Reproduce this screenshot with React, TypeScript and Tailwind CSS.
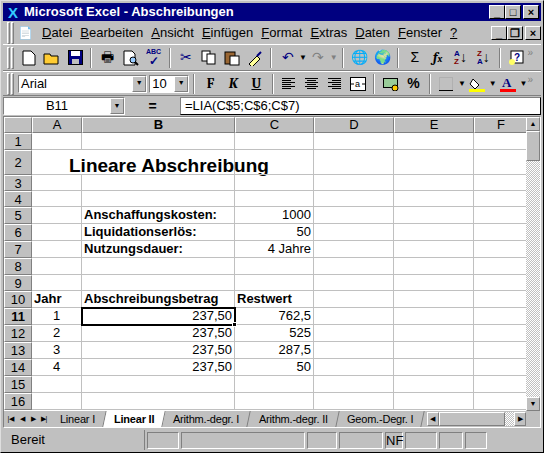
import React from 'react';

const ui = { fontFamily: '"Liberation Sans", Arial, sans-serif' };

const Raised = ({ className = '', children }: { className?: string; children?: React.ReactNode }) => (
  <div className={`border border-t-white border-l-white border-r-[#808080] border-b-[#808080] bg-[#c0c0c0] ${className}`}>{children}</div>
);

const Grip = () => (
  <div className="flex gap-[1px] h-[22px] mx-1">
    <div className="w-[3px] border border-t-white border-l-white border-r-[#808080] border-b-[#808080]" />
    <div className="w-[3px] border border-t-white border-l-white border-r-[#808080] border-b-[#808080]" />
  </div>
);

const Sep = () => <div className="w-[2px] h-[20px] mx-1 border-l border-l-[#808080] border-r border-r-white" />;

const Btn = ({ children }: { children: React.ReactNode }) => (
  <div className="w-[23px] h-[22px] flex items-center justify-center">{children}</div>
);

const Caption = ({ glyph }: { glyph: string }) => (
  <Raised className="w-[16px] h-[14px] flex items-center justify-center text-[11px] font-bold leading-none text-black border-b-black border-r-black">{glyph}</Raised>
);

const cols = ['A', 'B', 'C', 'D', 'E', 'F'];
type Cell = { t?: string; cls?: string };
const rows: { n: number; h: string; cells: Cell[] }[] = [
  { n: 1, h: 'h-[17px]', cells: [] },
  { n: 2, h: 'h-[25px]', cells: [{ t: 'Lineare Abschreibung', cls: 'col-span-2 text-[19px] font-bold pl-[37px] whitespace-nowrap' }] },
  { n: 3, h: 'h-[16px]', cells: [] },
  { n: 4, h: 'h-[16px]', cells: [] },
  { n: 5, h: 'h-[17px]', cells: [{}, { t: 'Anschaffungskosten:', cls: 'font-bold' }, { t: '1000', cls: 'text-right' }] },
  { n: 6, h: 'h-[17px]', cells: [{}, { t: 'Liquidationserlös:', cls: 'font-bold' }, { t: '50', cls: 'text-right' }] },
  { n: 7, h: 'h-[17px]', cells: [{}, { t: 'Nutzungsdauer:', cls: 'font-bold' }, { t: '4 Jahre', cls: 'text-right' }] },
  { n: 8, h: 'h-[17px]', cells: [] },
  { n: 9, h: 'h-[16px]', cells: [] },
  { n: 10, h: 'h-[17px]', cells: [{ t: 'Jahr', cls: 'font-bold' }, { t: 'Abschreibungsbetrag', cls: 'font-bold' }, { t: 'Restwert', cls: 'font-bold' }] },
  { n: 11, h: 'h-[17px]', cells: [{ t: '1', cls: 'text-center' }, { t: '237,50', cls: 'text-right sel' }, { t: '762,5', cls: 'text-right' }] },
  { n: 12, h: 'h-[17px]', cells: [{ t: '2', cls: 'text-center' }, { t: '237,50', cls: 'text-right' }, { t: '525', cls: 'text-right' }] },
  { n: 13, h: 'h-[17px]', cells: [{ t: '3', cls: 'text-center' }, { t: '237,50', cls: 'text-right' }, { t: '287,5', cls: 'text-right' }] },
  { n: 14, h: 'h-[17px]', cells: [{ t: '4', cls: 'text-center' }, { t: '237,50', cls: 'text-right' }, { t: '50', cls: 'text-right' }] },
  { n: 15, h: 'h-[17px]', cells: [] },
  { n: 16, h: 'h-[17px]', cells: [] },
];

function GridRow({ r }: { r: (typeof rows)[number] }) {
  const out: React.ReactNode[] = [];
  let col = 0;
  const cells = r.cells.slice();
  while (col < 6) {
    const c = cells.shift() || {};
    const span = c.cls?.includes('col-span-2') ? 2 : 1;
    const sel = c.cls?.includes('sel');
    out.push(
      <div key={col} className={`${c.cls?.replace('sel', '') ?? ''} relative border-r border-b border-[#c0c0c0] px-[2px] text-[13px] leading-[16px] flex items-end overflow-visible ${c.cls?.includes('text-right') ? 'justify-end' : c.cls?.includes('text-center') ? 'justify-center' : ''} ${sel ? 'outline-2 outline-black -outline-offset-1 z-10' : ''}`}>
        {c.t}
        {sel && <div className="absolute -right-[3px] -bottom-[3px] w-[5px] h-[5px] bg-black border border-white" />}
      </div>,
    );
    col += span;
  }
  const active = r.n === 11;
  return (
    <>
      <div className={`${r.h} bg-[#c0c0c0] border border-t-white border-l-white border-r-[#808080] border-b-[#808080] flex items-center justify-center text-[13px] leading-none ${active ? 'font-bold' : ''}`}>{r.n}</div>
      {out}
    </>
  );
}

export default function App() {
  return (
    <div style={ui} className="w-[544px] h-[453px] bg-[#c0c0c0] border border-t-[#dfdfdf] border-l-[#dfdfdf] border-r-black border-b-black p-[2px] flex flex-col overflow-hidden text-black">
      {/* title */}
      <div className="h-[18px] bg-[#000080] flex items-center px-[2px] shrink-0">
        <span className="text-[#3cf] font-bold text-[15px] leading-none mr-[3px] w-[16px] text-center">X</span>
        <span className="text-white font-bold text-[13px] flex-1">Microsoft Excel - Abschreibungen</span>
        <div className="flex gap-0"><Caption glyph="_" /><div className="mr-[2px]"><Caption glyph="□" /></div><Caption glyph="×" /></div>
      </div>
      {/* menu */}
      <div className="h-[22px] flex items-center text-[13px] mt-[1px] shrink-0">
        <Grip />
        <span className="w-[20px] text-[12px]">📄</span>
        {['Datei', 'Bearbeiten', 'Ansicht', 'Einfügen', 'Format', 'Extras', 'Daten', 'Fenster', '?'].map((m) => (
          <span key={m} className="px-[4px]"><u>{m[0]}</u>{m.slice(1)}</span>
        ))}
        <div className="flex-1" />
        <div className="flex"><Caption glyph="_" /><div className="mr-[2px]"><Caption glyph="❐" /></div><Caption glyph="×" /></div>
      </div>
      {/* toolbar 1 */}
      <div className="h-[27px] flex items-center border-t border-t-white border-b border-b-[#808080] shrink-0 text-[14px]">
        <Grip />
        <Btn><svg width="14" height="16"><path d="M1 1h8l4 4v10H1z" fill="white" stroke="black" /></svg></Btn>
        <Btn><svg width="18" height="14"><path d="M1 3h6l1 2h7v8H1z" fill="#ffcc33" stroke="black" /></svg></Btn>
        <Btn><svg width="15" height="15"><rect x="0.5" y="0.5" width="14" height="14" fill="#000080" stroke="black" /><rect x="3" y="1" width="9" height="5" fill="white" /><rect x="4" y="9" width="7" height="5" fill="#c0c0c0" /></svg></Btn>
        <Sep />
        <Btn>🖶</Btn>
        <Btn><svg width="16" height="16"><path d="M1 1h8l3 3v11H1z" fill="white" stroke="black" /><circle cx="10" cy="10" r="3" fill="#9cf" stroke="black" /><path d="M12 12l3 3" stroke="black" strokeWidth="2" /></svg></Btn>
        <Btn><span className="text-[7px] font-bold leading-none text-center text-[#000080]">ABC<br /><span className="text-[12px]">✓</span></span></Btn>
        <Sep />
        <Btn><span className="text-[#000080]">✂</span></Btn>
        <Btn><svg width="16" height="15"><rect x="1" y="1" width="8" height="10" fill="white" stroke="black" /><rect x="6" y="4" width="8" height="10" fill="white" stroke="black" /></svg></Btn>
        <Btn><svg width="16" height="16"><rect x="1" y="2" width="10" height="12" fill="#996633" stroke="black" /><rect x="6" y="6" width="9" height="9" fill="white" stroke="black" /></svg></Btn>
        <Btn><svg width="16" height="16"><path d="M2 14l8-8 3 3-8 8z" fill="#ffff99" stroke="black" /><path d="M10 6l4-4" stroke="#000080" strokeWidth="2" /></svg></Btn>
        <Sep />
        <Btn><span className="text-[#000080]">↶</span></Btn><span className="text-[8px]">▼</span>
        <Btn><span className="text-[#808080]">↷</span></Btn><span className="text-[8px] text-[#808080]">▼</span>
        <Sep />
        <Btn>🌐</Btn>
        <Btn>🌍</Btn>
        <Sep />
        <Btn>Σ</Btn>
        <Btn><i className="font-serif font-bold">f<span className="text-[10px]">x</span></i></Btn>
        <Btn><span className="text-[8px] font-bold leading-[8px] text-[#000080]">A<br /><span className="text-[#800000]">Z</span></span>↓</Btn>
        <Btn><span className="text-[8px] font-bold leading-[8px] text-[#800000]">Z<br /><span className="text-[#000080]">A</span></span>↓</Btn>
        <Sep />
        <Btn><svg width="16" height="16"><rect x="3" y="1" width="12" height="12" fill="white" stroke="black" /><text x="6" y="11" fontSize="10" fill="#000080" fontWeight="bold">?</text><circle cx="4" cy="12" r="3" fill="#ffff66" /></svg></Btn>
        <div className="flex-1" /><span className="text-[10px] text-[#808080] mr-2 self-start">»</span>
      </div>
      {/* toolbar 2 */}
      <div className="h-[25px] flex items-center border-t border-t-white border-b border-b-[#808080] shrink-0">
        <Grip />
        <div className="w-[130px] h-[18px] bg-white border border-t-[#808080] border-l-[#808080] border-r-white border-b-white flex items-center text-[13px] pl-[2px]">
          <span className="flex-1">Arial</span>
          <Raised className="w-[14px] h-[16px] text-[7px] flex items-center justify-center">▼</Raised>
        </div>
        <div className="w-[40px] h-[18px] ml-[2px] bg-white border border-t-[#808080] border-l-[#808080] border-r-white border-b-white flex items-center text-[13px] pl-[2px]">
          <span className="flex-1">10</span>
          <Raised className="w-[14px] h-[16px] text-[7px] flex items-center justify-center">▼</Raised>
        </div>
        <Sep />
        <Btn><b className="font-serif text-[14px]">F</b></Btn>
        <Btn><i className="font-serif font-bold text-[14px]">K</i></Btn>
        <Btn><u className="font-serif font-bold text-[14px]">U</u></Btn>
        <Sep />
        {['l', 'c', 'r'].map((a) => (
          <Btn key={a}><svg width="14" height="12">{[0, 1, 2, 3, 4, 5].map((i) => { const w = i % 2 ? 9 : 13; const x = a === 'l' ? 0 : a === 'c' ? (13 - w) / 2 : 13 - w; return <rect key={i} x={x} y={i * 2} width={w} height="1" fill="black" />; })}</svg></Btn>
        ))}
        <Btn><svg width="16" height="14"><rect x="0.5" y="0.5" width="15" height="13" fill="white" stroke="black" /><text x="5" y="10" fontSize="9">a</text><path d="M1 7h3M12 7h3" stroke="black" /></svg></Btn>
        <Sep />
        <Btn><svg width="16" height="14"><rect x="0.5" y="1.5" width="14" height="9" fill="#99cc99" stroke="black" /><circle cx="12" cy="11" r="3" fill="#ffcc00" stroke="black" /></svg></Btn>
        <Btn><b className="text-[14px]">%</b></Btn>
        <Sep />
        <Btn><svg width="14" height="14"><rect x="0.5" y="0.5" width="13" height="13" fill="none" stroke="#a0a0a0" strokeDasharray="1 1" /><path d="M0 13.5h14" stroke="black" /></svg></Btn><span className="text-[8px]">▼</span>
        <Btn><svg width="16" height="16"><path d="M4 3l6 6-4 4-5-5z" fill="white" stroke="black" /><rect x="0" y="13" width="16" height="3" fill="#ffff00" /></svg></Btn><span className="text-[8px]">▼</span>
        <Btn><svg width="16" height="16"><text x="2" y="11" fontSize="13" fontWeight="bold" fill="#000080" fontFamily="Liberation Serif">A</text><rect x="0" y="13" width="16" height="3" fill="#ff0000" /></svg></Btn><span className="text-[8px]">▼</span>
        <div className="flex-1" /><span className="text-[10px] text-[#808080] mr-2 self-start">»</span>
      </div>
      {/* formula bar */}
      <div className="h-[20px] flex items-center shrink-0">
        <div className="w-[122px] h-[18px] bg-white border border-t-[#808080] border-l-[#808080] border-r-white border-b-white flex items-center text-[13px]">
          <span className="flex-1 text-center">B11</span>
          <Raised className="w-[14px] h-[16px] text-[7px] flex items-center justify-center">▼</Raised>
        </div>
        <div className="w-[55px] flex items-center justify-center"><b className="text-[14px]">=</b></div>
        <div className="flex-1 h-[18px] bg-white border border-t-[#808080] border-l-[#808080] flex items-center text-[13px] pl-[4px]">=LIA(C$5;C$6;C$7)</div>
      </div>
      {/* sheet */}
      <div className="flex-1 flex flex-col border border-t-[#808080] border-l-[#808080] border-r-white border-b-white min-h-0">
        <div className="flex flex-1 min-h-0">
          <div className="flex-1 bg-white overflow-hidden">
            <div className="grid grid-cols-[28px_50px_153px_79px_80px_80px_54px]">
              <div className="h-[16px] bg-[#c0c0c0] border border-t-white border-l-white border-r-[#808080] border-b-[#808080]" />
              {cols.map((c) => (
                <div key={c} className={`h-[16px] bg-[#c0c0c0] border border-t-white border-l-white border-r-[#808080] border-b-[#808080] flex items-center justify-center text-[13px] ${c === 'B' ? 'font-bold' : ''}`}>{c}</div>
              ))}
              {rows.map((r) => <GridRow key={r.n} r={r} />)}
            </div>
          </div>
          <div className="w-[14px] flex flex-col bg-[#c0c0c0]">
            <Raised className="h-[14px] text-[7px] flex items-center justify-center">▲</Raised>
            <div className="flex-1 bg-[repeating-conic-gradient(#fff_0_25%,#c0c0c0_0_50%)] bg-[length:2px_2px] flex flex-col">
              <Raised className="h-[30px]" />
            </div>
            <Raised className="h-[14px] text-[7px] flex items-center justify-center">▼</Raised>
          </div>
        </div>
        <div className="h-[16px] flex items-center bg-[#c0c0c0] text-[11px] shrink-0">
          <div className="flex text-[7px] px-[2px] gap-[1px]">
            {['|◀', '◀', '▶', '▶|'].map((g) => <span key={g} className="w-[10px] text-center">{g}</span>)}
          </div>
          {['Linear I', 'Linear II', 'Arithm.-degr. I', 'Arithm.-degr. II', 'Geom.-Degr. I'].map((t) => (
            <div key={t} className={`h-[16px] px-[9px] flex items-center border-r border-[#808080] -skew-x-12 ${t === 'Linear II' ? 'bg-white font-bold' : ''}`}>
              <span className="skew-x-12 whitespace-nowrap tracking-[-0.2px]">{t}</span>
            </div>
          ))}
          <div className="flex-1 flex items-center ml-[4px] h-[14px]">
            <Raised className="w-[12px] h-[14px] text-[7px] flex items-center justify-center">◀</Raised>
            <Raised className="w-[66px] h-[14px]" />
            <div className="flex-1 h-[14px] bg-[repeating-conic-gradient(#fff_0_25%,#c0c0c0_0_50%)] bg-[length:2px_2px]" />
            <Raised className="w-[12px] h-[14px] text-[7px] flex items-center justify-center">▶</Raised>
          </div>
          <div className="w-[14px]" />
        </div>
      </div>
      {/* status */}
      <div className="h-[22px] flex items-center text-[13px] shrink-0 gap-[2px] pt-[2px]">
        <span className="w-[142px] pl-[8px] border-r border-r-[#808080]">Bereit</span>
        {[32, 124, 30, 44, 18, 32, 24, 22].map((w, i) => (
          <div key={i} style={{ width: w }} className="h-[17px] border border-t-[#808080] border-l-[#808080] border-r-white border-b-white text-[13px] leading-[15px]">{i === 4 ? 'NF' : ''}</div>
        ))}
      </div>
    </div>
  );
}
